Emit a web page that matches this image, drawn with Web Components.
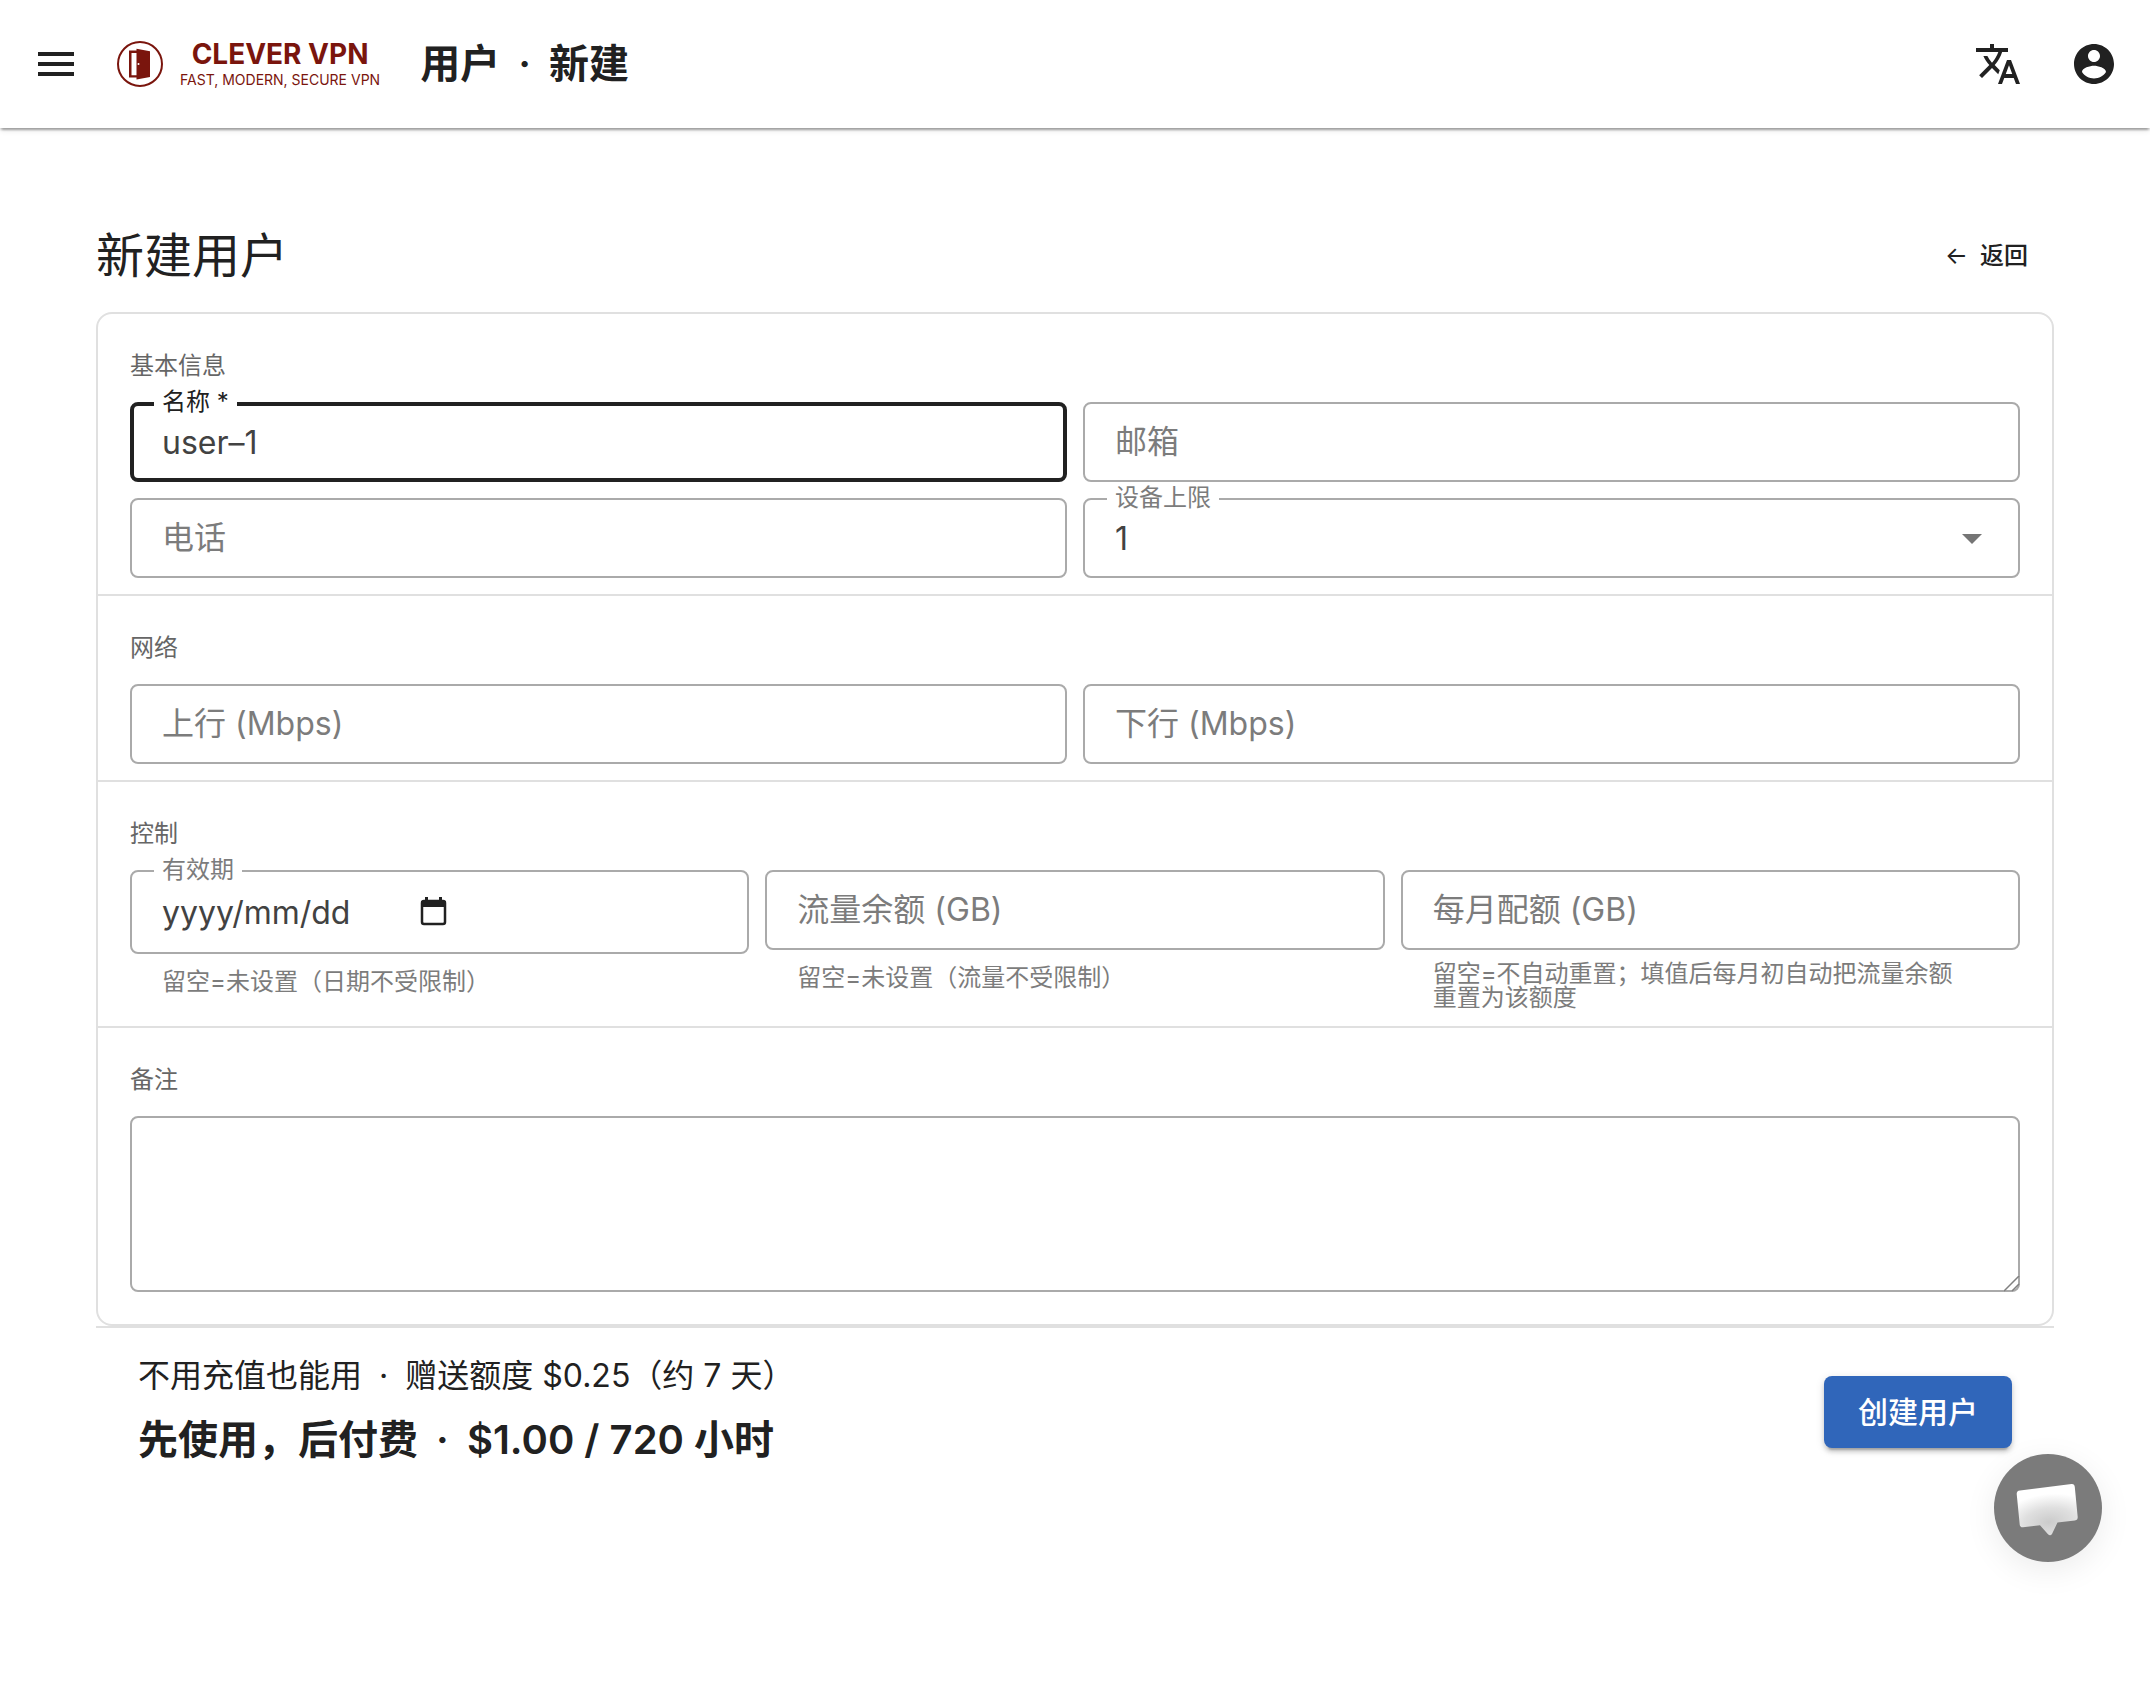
<!DOCTYPE html>
<html lang="zh-CN">
<head>
<meta charset="utf-8">
<title>Clever VPN</title>
<style>
body {
  margin: 0;
  background: #fff;
  color: #212121;
  font-family: Inter, "Noto Sans CJK SC", sans-serif;
  font-size: 32px;
}
.dot { margin: 0 8px; }
</style>
</head>
<body>
<app-bar>用户 <span class="dot">·</span> 新建</app-bar>
<user-page>
  <form-section heading="基本信息" columns="2">
    <text-field label="名称 *" value="user–1" focused></text-field>
    <text-field label="邮箱" type="email"></text-field>
    <text-field label="电话" type="tel"></text-field>
    <select-field label="设备上限" value="1"></select-field>
  </form-section>
  <form-section heading="网络" columns="2">
    <text-field label="上行 (Mbps)"></text-field>
    <text-field label="下行 (Mbps)"></text-field>
  </form-section>
  <form-section heading="控制" columns="3">
    <date-field label="有效期">留空=未设置（日期不受限制）</date-field>
    <text-field label="流量余额 (GB)">留空=未设置（流量不受限制）</text-field>
    <text-field label="每月配额 (GB)">留空=不自动重置；填值后每月初自动把流量余额重置为该额度</text-field>
  </form-section>
  <form-section heading="备注" columns="1" last>
    <note-field label="备注"></note-field>
  </form-section>
</user-page>
<chat-button></chat-button>

<script>
function attach(el, html) {
  el.attachShadow({ mode: 'open' }).innerHTML = html;
}

class AppBar extends HTMLElement {
  constructor() {
    super();
    attach(this, `
<style>
:host {
  display: block;
  position: relative;
  background: #fff;
  box-shadow: 0 4px 2px -2px rgba(0,0,0,.2), 0 2px 2px 0 rgba(0,0,0,.14), 0 2px 6px 0 rgba(0,0,0,.12);
}
header {
  display: flex;
  align-items: center;
  height: 128px;
  padding: 0 16px;
}
button {
  display: flex;
  padding: 16px;
  border: 0;
  background: none;
  color: inherit;
}
button svg { width: 48px; height: 48px; fill: currentColor; }
.logo {
  display: flex;
  align-items: center;
  gap: 16px;
  margin-left: 20px;
  color: #7a150d;
  text-decoration: none;
}
.logo svg { width: 48px; height: 48px; }
.words { display: flex; flex-direction: column; align-items: center; }
.name { font-size: 28px; line-height: 32px; font-weight: 700; }
.tag { font-size: 14px; line-height: 20px; }
h1 {
  flex: 1;
  margin: 0 0 0 40px;
  font-size: 40px;
  line-height: 64px;
  font-weight: 600;
}
nav { display: flex; gap: 16px; }
</style>
<header>
  <button type="button" aria-label="菜单">
    <svg viewBox="0 0 24 24"><path d="M3 18h18v-2H3zm0-5h18v-2H3zm0-7v2h18V6z"/></svg>
  </button>
  <a class="logo" href="#">
    <svg viewBox="0 0 48 48">
      <circle cx="24" cy="24" r="22" fill="none" stroke="currentColor" stroke-width="2"/>
      <path d="M21 37.5h-8v-27h8V13h-5.500v22.300H21z" fill="currentColor"/>
      <path d="M20.500 8.700 34 11.300V37l-13.500 2.400z" fill="currentColor"/>
      <circle cx="22.500" cy="24" r="1" fill="#fff"/>
    </svg>
    <span class="words">
      <span class="name">CLEVER VPN</span>
      <span class="tag">FAST, MODERN, SECURE VPN</span>
    </span>
  </a>
  <h1><slot></slot></h1>
  <nav>
    <button type="button" aria-label="语言">
      <svg viewBox="0 0 24 24"><path d="m12.87 15.07-2.54-2.51.03-.03c1.74-1.94 2.98-4.17 3.71-6.53H17V4h-7V2H8v2H1v1.99h11.17C11.5 7.92 10.44 9.75 9 11.35 8.07 10.32 7.3 9.19 6.69 8h-2c.73 1.63 1.73 3.17 2.98 4.56l-5.09 5.02L4 19l5-5 3.11 3.11zM18.5 10h-2L12 22h2l1.12-3h4.75L21 22h2zm-2.62 7 1.62-4.33L19.12 17z"/></svg>
    </button>
    <button type="button" aria-label="账户">
      <svg viewBox="0 0 24 24"><path d="M12 2C6.48 2 2 6.48 2 12s4.48 10 10 10 10-4.48 10-10S17.52 2 12 2m0 3c1.66 0 3 1.34 3 3s-1.34 3-3 3-3-1.34-3-3 1.34-3 3-3m0 14.2c-2.5 0-4.71-1.28-6-3.22.03-1.99 4-3.08 6-3.08 1.99 0 5.97 1.09 6 3.08-1.29 1.94-3.5 3.22-6 3.22"/></svg>
    </button>
  </nav>
</header>`);
  }
}

class UserPage extends HTMLElement {
  constructor() {
    super();
    attach(this, `
<style>
:host { display: block; padding: 96px; }
.top {
  display: flex;
  align-items: center;
  justify-content: space-between;
  margin-bottom: 24px;
}
h2 { margin: 0; font-size: 48px; line-height: 64px; font-weight: 400; }
.back {
  display: flex;
  gap: 12px;
  padding: 0 26px;
  color: inherit;
  font-size: 24px;
  line-height: 32px;
  font-weight: 500;
  text-decoration: none;
}
.arrow { font-weight: 400; }
.card { border: 2px solid #e0e0e0; border-radius: 16px; }
footer {
  display: flex;
  align-items: center;
  justify-content: space-between;
  padding: 24px 42px;
  border-top: 2px solid #e0e0e0;
}
p { margin: 0; line-height: 48px; }
.price { margin-top: 8px; font-size: 40px; line-height: 64px; font-weight: 600; }
.dot { margin: 0 8px; }
.create {
  height: 72px;
  padding: 0 34px;
  border: 0;
  border-radius: 8px;
  background: #3066ba;
  color: #fff;
  font-family: inherit;
  font-size: 30px;
  line-height: 40px;
  font-weight: 500;
  box-shadow: 0 6px 2px -4px rgba(0,0,0,.2), 0 4px 4px 0 rgba(0,0,0,.14), 0 2px 10px 0 rgba(0,0,0,.12);
}
</style>
<main>
  <div class="top">
    <h2>新建用户</h2>
    <a class="back" href="#"><span class="arrow">←</span> <span>返回</span></a>
  </div>
  <div class="card"><slot></slot></div>
  <footer>
    <div>
      <p>不用充值也能用 <span class="dot">·</span> 赠送额度 $0.25（约 7 天）</p>
      <p class="price">先使用，后付费 <span class="dot">·</span> $1.00 / 720 小时</p>
    </div>
    <button class="create" type="button">创建用户</button>
  </footer>
</main>`);
  }
}

class FormSection extends HTMLElement {
  constructor() {
    super();
    attach(this, `
<style>
:host { display: block; padding: 32px 32px 16px; border-bottom: 2px solid #e0e0e0; }
:host([last]) { padding-bottom: 32px; border-bottom: 0; }
h3 {
  margin: 0 0 16px;
  color: #666;
  font-size: 24px;
  line-height: 40px;
  font-weight: 400;
}
.grid { display: grid; align-items: start; gap: 16px; }
</style>
<h3></h3>
<div class="grid"><slot></slot></div>`);
    this.shadowRoot.querySelector('h3').textContent = this.getAttribute('heading');
    this.shadowRoot.querySelector('.grid').style.gridTemplateColumns =
      `repeat(${this.getAttribute('columns')}, minmax(0, 1fr))`;
  }
}

// Shared look of every outlined field: box, label in the border, helper text.
const fieldStyle = `
:host { display: block; }
.box {
  position: relative;
  display: flex;
  align-items: center;
  box-sizing: border-box;
  height: 80px;
  border: 2px solid #aaa;
  border-radius: 8px;
}
label {
  position: absolute;
  left: 30px;
  top: 50%;
  transform: translateY(-50%);
  color: #7c7c7c;
  line-height: 40px;
  pointer-events: none;
}
.filled label {
  left: 22px;
  top: -2px;
  padding: 0 8px;
  background: #fff;
  font-size: 24px;
  line-height: 24px;
}
input, select {
  flex: 1;
  min-width: 0;
  height: 100%;
  padding: 0 30px;
  border: 0;
  outline: 0;
  appearance: none;
  background: none;
  color: #424242;
  font: inherit;
}
.helper {
  display: flex;
  align-items: center;
  min-height: 32px;
  margin: 12px 48px 0 32px;
  color: #7c7c7c;
  font-size: 24px;
  line-height: 24px;
}`;

class TextField extends HTMLElement {
  constructor() {
    super();
    attach(this, `
<style>${fieldStyle}
:host([focused]) .box { border: 4px solid #212121; }
:host([focused]) label { left: 20px; top: -4px; color: #212121; }
:host([focused]) input { padding: 0 28px; }
</style>
<div class="box">
  <label for="control"></label>
  <input id="control">
</div>`);
    const input = this.shadowRoot.querySelector('input');
    input.type = this.getAttribute('type') || 'text';
    input.value = this.getAttribute('value') || '';
    this.shadowRoot.querySelector('label').textContent = this.getAttribute('label');
    if (input.value) this.shadowRoot.querySelector('.box').classList.add('filled');
    if (this.textContent.trim()) {
      this.shadowRoot.querySelector('.box').insertAdjacentHTML(
        'afterend', '<div class="helper"><span><slot></slot></span></div>');
    }
  }
}

class SelectField extends HTMLElement {
  constructor() {
    super();
    attach(this, `
<style>${fieldStyle}
svg {
  position: absolute;
  right: 22px;
  width: 48px;
  height: 48px;
  fill: #757575;
  pointer-events: none;
}
</style>
<div class="box filled">
  <label for="control"></label>
  <select id="control"><option></option></select>
  <svg viewBox="0 0 24 24"><path d="m7 10 5 5 5-5z"/></svg>
</div>`);
    this.shadowRoot.querySelector('label').textContent = this.getAttribute('label');
    this.shadowRoot.querySelector('option').textContent = this.getAttribute('value');
  }
}

class DateField extends HTMLElement {
  constructor() {
    super();
    attach(this, `
<style>${fieldStyle}
.box { height: 84px; }
input { flex: none; box-sizing: border-box; width: 286px; padding-right: 0; }
input::placeholder { color: #424242; opacity: 1; }
button { display: flex; padding: 0; border: 0; background: none; color: #212121; }
svg { width: 32px; height: 32px; }
</style>
<div class="box filled">
  <label for="control"></label>
  <input id="control" type="text" placeholder="yyyy/mm/dd">
  <button type="button" aria-label="选择日期">
    <svg viewBox="0 0 32 32">
      <rect x="4" y="5" width="23" height="23" rx="2" fill="none" stroke="currentColor" stroke-width="2.500"/>
      <path d="M3 5h25v6H3zM7 1h3v5H7zM21 1h3v5h-3z" fill="currentColor"/>
    </svg>
  </button>
</div>
<div class="helper"><span><slot></slot></span></div>`);
    this.shadowRoot.querySelector('label').textContent = this.getAttribute('label');
  }
}

class NoteField extends HTMLElement {
  constructor() {
    super();
    attach(this, `
<style>
:host { display: block; }
textarea {
  display: block;
  box-sizing: border-box;
  width: 100%;
  height: 176px;
  padding: 16px 30px;
  border: 2px solid #aaa;
  border-radius: 8px;
  outline: 0;
  background: #fff;
  color: #424242;
  font: inherit;
  resize: none;
}
.wrap { position: relative; }
svg { position: absolute; right: 0; bottom: 0; width: 16px; height: 16px; pointer-events: none; }
</style>
<div class="wrap">
  <textarea></textarea>
  <svg viewBox="0 0 16 16" fill="none" stroke="#808080" stroke-width="1.5"><path d="M0 15 15 0M8 15l7-7"/></svg>
</div>`);
    this.shadowRoot.querySelector('textarea').setAttribute('aria-label', this.getAttribute('label'));
  }
}

class ChatButton extends HTMLElement {
  constructor() {
    super();
    attach(this, `
<style>
:host { position: fixed; right: 48px; bottom: 142px; }
button {
  display: block;
  width: 108px;
  height: 108px;
  padding: 0;
  border: 0;
  border-radius: 50%;
  background: #7b7b7b;
  box-shadow: 0 8px 32px rgba(0,0,0,.08);
}
svg { display: block; width: 108px; height: 108px; }
</style>
<button type="button" aria-label="在线客服">
  <svg viewBox="0 0 108 108">
    <defs>
      <radialGradient id="fade" gradientUnits="userSpaceOnUse" cx="0" cy="0" r="1" gradientTransform="translate(55 68) rotate(-6) scale(50 28)">
        <stop offset="0" stop-color="#cbcbcb"/>
        <stop offset="0.500" stop-color="#dfdfdf"/>
        <stop offset="1" stop-color="#fff"/>
      </radialGradient>
    </defs>
    <path fill="url(#fade)" d="M26 36.400 77.500 30q3-.300 3.300 3l2.900 30q.200 3-2.800 3.500L63.500 68.500l-5.500 11.500q-1.700 2.500-4 .300L46 71.200l-17 2q-3 .200-3.300-2.800L22.700 40q-.200-3.200 3.300-3.600z"/>
  </svg>
</button>`);
  }
}

customElements.define('app-bar', AppBar);
customElements.define('user-page', UserPage);
customElements.define('form-section', FormSection);
customElements.define('text-field', TextField);
customElements.define('select-field', SelectField);
customElements.define('date-field', DateField);
customElements.define('note-field', NoteField);
customElements.define('chat-button', ChatButton);
</script>
</body>
</html>
